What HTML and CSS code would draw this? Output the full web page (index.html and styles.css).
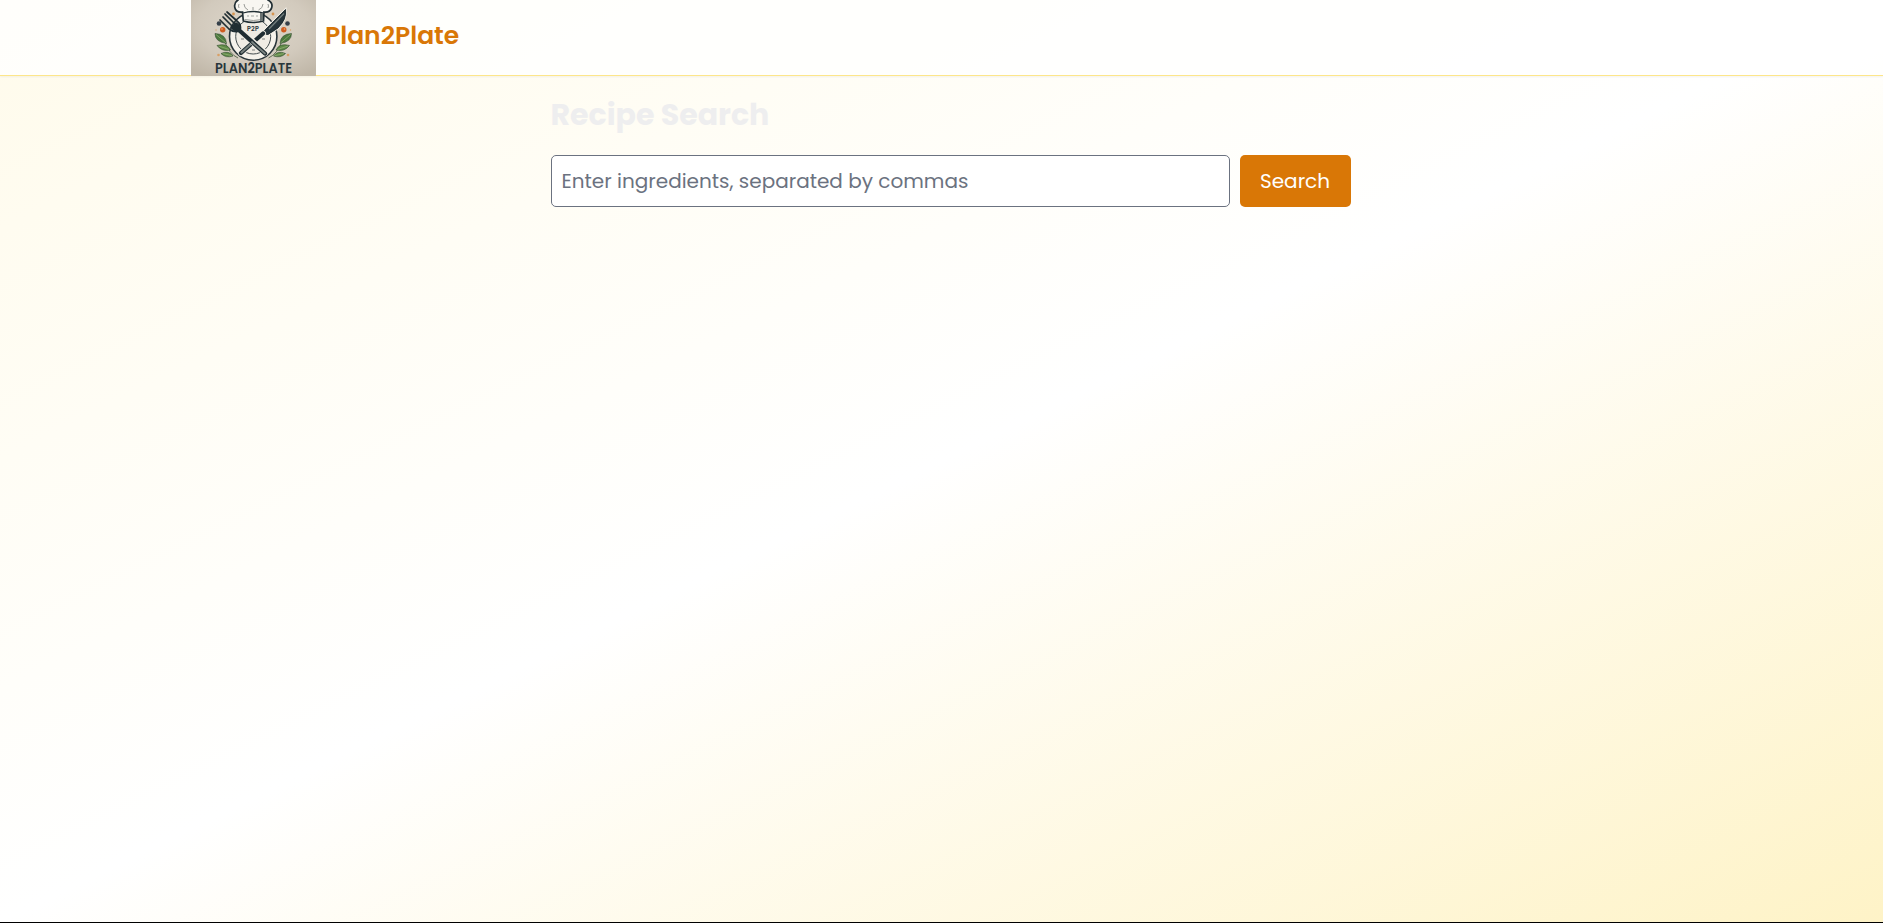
FILE: index.html
```html
<!DOCTYPE html>
<html lang="en">
<head>
<meta charset="utf-8">
<title>Plan2Plate</title>
<link rel="stylesheet" href="styles.css">
</head>
<body>
<header class="header">
  <div class="brand">
    <svg class="logo" viewBox="191 0 125 76" role="img" aria-label="Plan2Plate logo">
      <defs>
        <radialGradient id="paper" cx="50%" cy="35%" r="75%">
          <stop offset="0" stop-color="#ded7cb"/>
          <stop offset=".6" stop-color="#d2cabd"/>
          <stop offset="1" stop-color="#c0b7a8"/>
        </radialGradient>
        <g id="leaves">
          <path d="M238 58Q229 54 224 40" fill="none" stroke="#465a3c" stroke-width=".8"/>
          <path d="M226.5 43.5Q215 42 215 33.5Q226 34 226.5 43.5Z" fill="#4c7a3d" stroke="#304a30" stroke-width=".6"/>
          <path d="M230.500 50Q222 52 217 45.500Q227 42.500 230.500 50Z" fill="#5d8a45" stroke="#304a30" stroke-width=".6"/>
          <path d="M233 56Q226 58.500 221 53.500Q229 50 233 56Z" fill="#5d8a45" stroke="#304a30" stroke-width=".6"/>
          <path d="M216 34.500L226 43M218.500 46L229 49.500M222.500 53.500L232 55.700" stroke="#a3b987" stroke-width=".6"/>
          <circle cx="219" cy="23.5" r="2.3" fill="#35404a"/>
          <circle cx="222.7" cy="29.7" r="2.7" fill="#cf5c20"/>
          <circle cx="222" cy="29" r=".8" fill="#edab78"/>
          <circle cx="233.5" cy="14" r="1.4" fill="#d6944f"/>
          <circle cx="218.5" cy="55" r="1.3" fill="#d9a066"/>
          <circle cx="216" cy="30" r=".7" fill="#d9a066"/>
        </g>
      </defs>
      <rect x="191" width="125" height="76" fill="url(#paper)"/>
      <circle cx="253.2" cy="36.5" r="23.7" fill="#f5f2eb" stroke="#29353a" stroke-width="1.6"/>
      <circle cx="253.2" cy="36.5" r="17.5" fill="#f0ece4" stroke="#434c4e" stroke-width="1"/>
      <path d="M241 39h3M262 39h3M252 50h3" stroke="#4e5657" stroke-width=".7"/>
      <use href="#leaves"/>
      <use href="#leaves" transform="translate(506.5 0) scale(-1 1)"/>
      <path d="M243.3 21L242.5 12C233 13 233 3 238 0L241-4H265L268 0C275 4 272 13 264 12L263.500 21Q253 24 243.3 21Z" fill="#f8f6f1" stroke="#222f34" stroke-width="1.7"/>
      <path d="M243 13Q253 10 263.500 13" fill="none" stroke="#222f34" stroke-width="1.3"/>
      <path d="M244.500 19.500Q253 21.500 262.500 19.500M248 10Q244 8 244 4M258.500 10Q263 8 263 4M253 10V7M239 8Q238 6 239 4M268 8Q269 6 268 4" fill="none" stroke="#9a9c98" stroke-width="1"/>
      <path d="M260 13V21L263 20.500V13Z" fill="#6a7271"/>
      <path d="M247 16h2M251 16h3M256 16h2" stroke="#7b8180" stroke-width=".7"/>
      <text class="monogram" x="247" y="31.2" textLength="12">P2P</text>
      <path d="M285.500 9.500Q287 19 278 28L268 34.500L261.500 33.500Z" fill="#25343a" stroke="#f0ede5" stroke-width="2.4" paint-order="stroke"/>
      <path d="M285.500 9.500Q287 19 278 28L268 34.500L261.500 33.500Z" fill="#25343a" stroke="#1c282c" stroke-width=".8"/>
      <path d="M284 13.500L269 29" stroke="#75807f" stroke-width="1.2"/>
      <path d="M263 33.5L241 53" stroke="#f0ede5" stroke-width="6" stroke-linecap="round"/>
      <path d="M263 33.5L241 53" stroke="#202d32" stroke-width="4.2" stroke-linecap="round"/>
      <path d="M251 44L241.500 52.500" stroke="#78817f" stroke-width="2" stroke-linecap="round"/>
      <path d="M240 30L265 53" stroke="#f0ede5" stroke-width="6.2" stroke-linecap="round"/>
      <path d="M240 31L265 53.500" stroke="#202d32" stroke-width="4.3" stroke-linecap="round"/>
      <path d="M252 42L265 53.500" stroke="#7c8583" stroke-width="1.7" stroke-linecap="round"/>
      <path d="M220 20L229 29Q234 33 240 31Q242 25 237 21L227 12M223 17L233 27M225 14L236 25" fill="none" stroke="#202d32" stroke-width="1.7" stroke-linecap="round" stroke-linejoin="round"/>
      <path d="M230 27L236 22Q242 25 240 31Q234 33 230 27Z" fill="#202d32"/>
      <text class="wordmark" x="215" y="73" textLength="77" lengthAdjust="spacingAndGlyphs">PLAN2PLATE</text>
    </svg>
    <span class="brand-name">Plan2Plate</span>
  </div>
</header>
<main class="content">
  <h1 class="title">Recipe Search</h1>
  <form class="search">
    <input class="search-input" type="text" placeholder="Enter ingredients, separated by commas">
    <button class="search-button" type="button">Search</button>
  </form>
</main>
</body>
</html>
```
FILE: styles.css
```css
* { box-sizing: border-box; }

body {
  margin: 0;
  height: 100vh;
  overflow: hidden;
  border-bottom: 1px solid #000;
  background: linear-gradient(to bottom right, #fffbeb, #fff, #fef3c7) no-repeat #000;
  background-size: 100% 922px;
  font-family: Poppins, Inter, "Open Sans", sans-serif;
}

.header {
  height: 76px;
  padding-left: 191px;
  border-bottom: 1px solid #fde68a;
  background: rgba(255, 255, 255, .8);
  box-shadow: 0 1px 2px rgba(0, 0, 0, .05);
}

.brand {
  display: flex;
  gap: 9px;
  height: 76px;
}

.logo {
  display: block;
  width: 125px;
  height: 76px;
}

.monogram {
  font: 700 6px Inter, sans-serif;
  fill: #2b373b;
}

.wordmark {
  font: 600 13.5px Poppins, Lato, sans-serif;
  fill: #29363b;
}

.brand-name {
  padding-top: 18px;
  color: #d97706;
  font-size: 25px;
  font-weight: 600;
  line-height: 36px;
}

.content {
  width: 800px;
  margin-left: 550.5px;
  padding-top: 19px;
}

.title {
  margin: 0 0 20px;
  color: #eeeeef;
  font-size: 30px;
  font-weight: 700;
  line-height: 40px;
}

.search {
  display: flex;
  gap: 10px;
}

.search-input {
  width: 679px;
  height: 52px;
  padding: 0 10px;
  border: 1px solid #6b7280;
  border-radius: 5px;
  background: #fff;
  color: #111827;
  font: inherit;
  font-size: 20px;
}

.search-input::placeholder {
  color: #6b7280;
  opacity: 1;
}

.search-button {
  width: 111px;
  height: 52px;
  padding: 0;
  border: 0;
  border-radius: 5px;
  background: #d97706;
  color: #fff;
  font: inherit;
  font-size: 20px;
}
```
